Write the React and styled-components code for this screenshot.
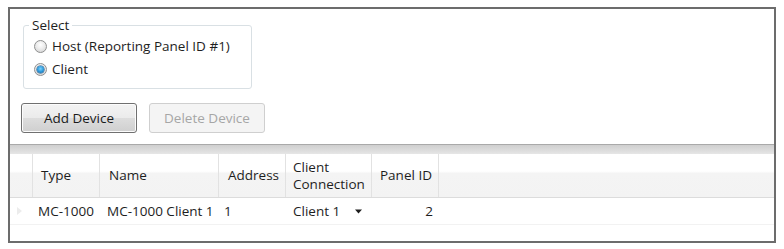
import React from "react";
import styled, { createGlobalStyle } from "styled-components";

const GlobalStyle = createGlobalStyle`
  html, body {
    margin: 0;
    padding: 0;
    background: #ffffff;
  }
  body {
    font-family: "Open Sans", "Noto Sans", sans-serif;
    font-size: 13.5px;
    color: #1e1e1e;
  }
`;

/* outer window frame */
const Frame = styled.div`
  box-sizing: border-box;
  margin: 7px 0 0 8px;
  width: 768px;
  height: 236px;
  border: 2px solid #6c6c6c;
  background: #ffffff;
  overflow: hidden;
  display: flex;
  flex-direction: column;
`;

const TopSection = styled.div`
  height: 135px;
  box-sizing: border-box;
  padding: 8px 0 0 13px;
  display: flex;
  flex-direction: column;
`;

const GroupBox = styled.fieldset`
  box-sizing: border-box;
  width: 229px;
  height: 72px;
  margin: 0;
  padding: 4px 10px 8px 10px;
  border: 1px solid #d9e0e4;
  border-radius: 3px;
  display: flex;
  flex-direction: column;
  gap: 5px;
`;

const Legend = styled.legend`
  padding: 0 3px;
  margin-left: -5px;
  line-height: 16px;
  color: #1e1e1e;
`;

const RadioRow = styled.label`
  display: flex;
  align-items: center;
  gap: 5px;
  height: 18px;
  line-height: 18px;
  white-space: nowrap;
`;

const RadioDot = styled.span`
  box-sizing: border-box;
  width: 13px;
  height: 13px;
  border-radius: 50%;
  border: 1px solid #8e8f8f;
  background: radial-gradient(circle at 50% 35%, #ffffff 0%, #ececec 45%, #cfcfcf 100%);
  display: flex;
  align-items: center;
  justify-content: center;
  flex: none;

  &::after {
    content: "";
    display: ${({ $checked }) => ($checked ? "block" : "none")};
    width: 7px;
    height: 7px;
    border-radius: 50%;
    background: radial-gradient(circle at 50% 40%, #7fd4ff 0%, #2996d8 55%, #0e5a9a 100%);
    box-shadow: 0 0 0 0.5px #0d4f85;
  }
`;

const ButtonRow = styled.div`
  display: flex;
  gap: 12px;
  margin-top: 14px;
  margin-left: -2px;
`;

const Button = styled.button`
  box-sizing: border-box;
  width: 116px;
  height: 30px;
  border-radius: 3px;
  font-family: "Open Sans", "Noto Sans", sans-serif;
  font-size: 13.5px;
  padding: 0;
  border: 1px solid ${({ disabled }) => (disabled ? "#cfcfcf" : "#707070")};
  color: ${({ disabled }) => (disabled ? "#a6a6a6" : "#1a1a1a")};
  background: ${({ disabled }) =>
    disabled
      ? "#f4f4f4"
      : "linear-gradient(to bottom, #f3f3f3 0%, #ebebeb 50%, #dddddd 51%, #cfcfcf 100%)"};
  box-shadow: ${({ disabled }) => (disabled ? "none" : "inset 0 0 0 1px #fcfcfc")};
`;

/* data grid */
const Grid = styled.div`
  display: flex;
  flex-direction: column;
`;

const GripBar = styled.div`
  height: 10px;
  box-sizing: border-box;
  border-top: 1px solid #a9a9a9;
  background: linear-gradient(to bottom, #cfcfcf 0%, #dcdcdc 60%, #e6e6e6 100%);
`;

const Columns = "23px 67px 119px 67px 86px 67px 1fr";

const HeaderRow = styled.div`
  display: grid;
  grid-template-columns: ${Columns};
  height: 44px;
  box-sizing: border-box;
  border-bottom: 1px solid #dcdcdc;
  background: linear-gradient(to bottom, #ffffff 0%, #ffffff 40%, #f4f4f4 45%, #f3f3f3 100%);
`;

const HeaderCell = styled.div`
  display: flex;
  align-items: center;
  padding-left: ${({ $pad }) => $pad ?? 8}px;
  border-right: ${({ $last }) => ($last ? "none" : "1px solid #e2e2e2")};
  line-height: 17px;
  white-space: pre-line;
`;

const DataRow = styled.div`
  display: grid;
  grid-template-columns: ${Columns};
  height: 27px;
  box-sizing: border-box;
  border-bottom: 1px solid #f2f2f2;
`;

const Cell = styled.div`
  display: flex;
  align-items: center;
  justify-content: ${({ $right }) => ($right ? "flex-end" : "flex-start")};
  padding: 0 ${({ $right }) => ($right ? 6 : 0)}px 0 ${({ $pad }) => $pad ?? 5}px;
  white-space: nowrap;
`;

const RowMarker = styled.div`
  display: flex;
  align-items: center;
  padding-left: 7px;
`;

const ComboCell = styled(Cell)`
  justify-content: space-between;
  padding-right: 10px;
`;

function Triangle() {
  return (
    <svg width="7" height="5" viewBox="0 0 7 5">
      <path d="M0 0.5 L7 0.5 L3.5 4.5 Z" fill="#1e1e1e" />
    </svg>
  );
}

function RightTriangle() {
  return (
    <svg width="5" height="8" viewBox="0 0 5 8">
      <path d="M0 0 L5 4 L0 8 Z" fill="#ececec" />
    </svg>
  );
}

export default function App() {
  return (
    <>
      <GlobalStyle />
      <Frame>
        <TopSection>
          <GroupBox>
            <Legend>Select</Legend>
            <RadioRow>
              <RadioDot />
              Host (Reporting Panel ID #1)
            </RadioRow>
            <RadioRow>
              <RadioDot $checked />
              Client
            </RadioRow>
          </GroupBox>
          <ButtonRow>
            <Button>Add Device</Button>
            <Button disabled>Delete Device</Button>
          </ButtonRow>
        </TopSection>

        <Grid>
          <GripBar />
          <HeaderRow>
            <HeaderCell />
            <HeaderCell>Type</HeaderCell>
            <HeaderCell $pad={9}>Name</HeaderCell>
            <HeaderCell $pad={9}>Address</HeaderCell>
            <HeaderCell $pad={7}>{"Client\nConnection"}</HeaderCell>
            <HeaderCell>Panel ID</HeaderCell>
            <HeaderCell $last />
          </HeaderRow>
          <DataRow>
            <RowMarker>
              <RightTriangle />
            </RowMarker>
            <Cell>MC-1000</Cell>
            <Cell $pad={7}>MC-1000 Client 1</Cell>
            <Cell>1</Cell>
            <ComboCell $pad={7}>
              Client 1
              <Triangle />
            </ComboCell>
            <Cell $right>2</Cell>
            <Cell />
          </DataRow>
        </Grid>
      </Frame>
    </>
  );
}
